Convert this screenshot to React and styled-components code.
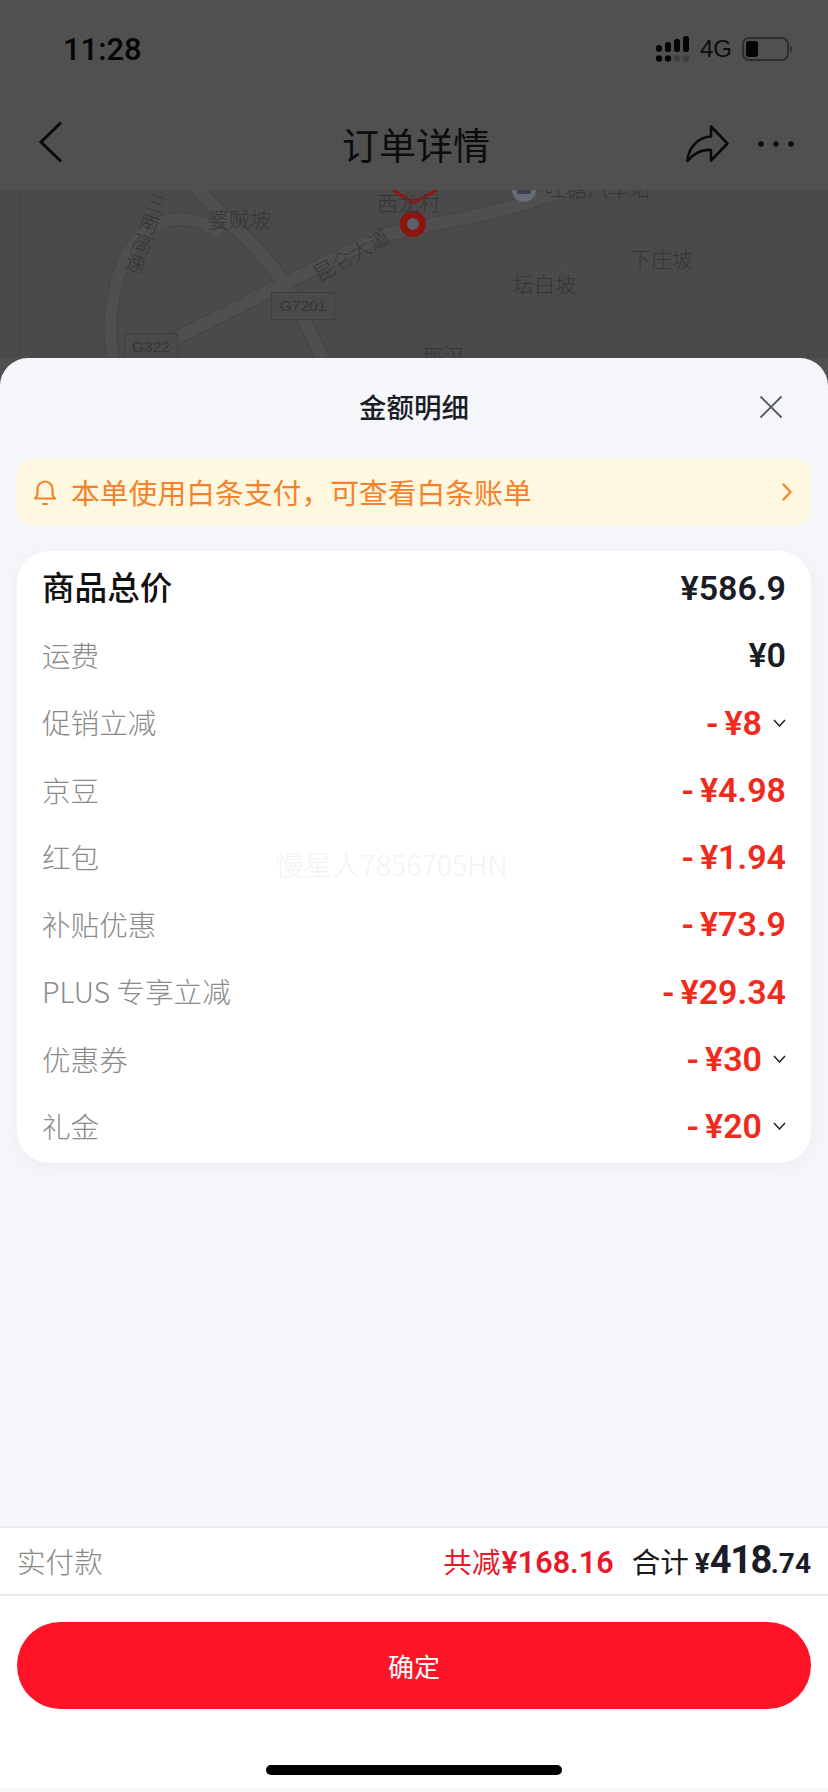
import styled, { createGlobalStyle } from 'styled-components'

const CJK = `"Noto Sans CJK SC", "Noto Sans", sans-serif`
const NUM = `Roboto, "Noto Sans CJK SC", sans-serif`
const INK = '#1a1c26'
const RED = '#f02a1d'

const GlobalStyle = createGlobalStyle`
  html, body {
    margin: 0;
    padding: 0;
    background: #f5f6fa;
  }
  * {
    box-sizing: border-box;
  }
`

const Page = styled.div`
  width: 828px;
  height: 1792px;
  display: flex;
  flex-direction: column;
  overflow: hidden;
  position: relative;
  background: #505050;
  font-family: ${CJK};
`

const StatusBar = styled.div`
  height: 98px;
  padding: 0 36px 0 63px;
  display: flex;
  align-items: center;
  justify-content: space-between;
  color: #050505;
`

const Time = styled.div`
  font-family: ${NUM};
  font-size: 31px;
  font-weight: 500;
`

const StatusIcons = styled.div`
  display: flex;
  align-items: center;
`

const NetworkType = styled.span`
  font-family: 'Liberation Sans', sans-serif;
  font-size: 24px;
  margin: 0 10px 0 10px;
  color: #0d0d0d;
`

const NavBar = styled.div`
  height: 92px;
  padding: 0 34px 0 38px;
  display: grid;
  grid-template-columns: 1fr auto 1fr;
  align-items: center;
  color: #0a0a0a;
`

const NavTitle = styled.div`
  font-size: 37px;
  font-weight: 400;
  line-height: 1;
  color: #0c0c0c;
`

const NavRight = styled.div`
  display: flex;
  justify-content: flex-end;
  align-items: center;
  gap: 29px;
`

const MapArea = styled.div`
  height: 168px;
  position: relative;
  overflow: hidden;
  background: #4a4a4a;
`

const MapDrawing = styled.svg`
  position: absolute;
  left: 0;
  top: 0;
`

const MapLabel = styled.span`
  position: absolute;
  left: ${({ $x }) => $x}px;
  top: ${({ $y }) => $y}px;
  transform: rotate(${({ $rotate }) => $rotate || 0}deg);
  writing-mode: ${({ $vertical }) => ($vertical ? 'vertical-rl' : 'horizontal-tb')};
  font-size: 21px;
  font-weight: 300;
  line-height: 1;
  white-space: nowrap;
  color: #363636;
`

const RoadShield = styled.span`
  position: absolute;
  left: ${({ $x }) => $x}px;
  top: ${({ $y }) => $y}px;
  width: ${({ $w }) => $w}px;
  height: ${({ $h }) => $h}px;
  display: flex;
  align-items: center;
  justify-content: center;
  border: 1px solid #3d3d3d;
  background: #4a4a4a;
  font-family: 'Liberation Sans', sans-serif;
  font-size: 15.500px;
  color: #363636;
`

const Sheet = styled.div`
  flex: 1;
  position: relative;
  display: flex;
  flex-direction: column;
  background: #f5f6fa;
  border-radius: 28px 28px 0 0;
`

const SheetHeader = styled.div`
  height: 101px;
  padding: 0 45px 4px 0;
  position: relative;
  display: flex;
  align-items: center;
  justify-content: flex-end;
`

const SheetTitle = styled.div`
  position: absolute;
  left: 0;
  right: 0;
  top: 31px;
  text-align: center;
  font-size: 27.500px;
  font-weight: 500;
  line-height: 1.3;
  color: ${INK};
`

const Notice = styled.div`
  height: 66px;
  margin: 0 17px;
  padding: 0 19px 0 16px;
  display: flex;
  align-items: center;
  gap: 14px;
  border-radius: 16px;
  background: #fff8e0;
  color: #f5822a;
  font-size: 28.800px;
`

const NoticeText = styled.span`
  flex: 1;
  line-height: 1;
`

const Card = styled.div`
  height: 612px;
  margin: 26px 17px 0;
  padding: 3px 25px;
  border-radius: 32px;
  background: #fff;
  box-shadow: 0 4px 14px rgba(210, 214, 226, 0.25);
`

const Row = styled.div`
  height: 67.250px;
  display: flex;
  align-items: center;
  justify-content: space-between;
`

const RowLabel = styled.span`
  margin-top: ${({ $strong }) => ($strong ? -3 : 1)}px;
  font-size: ${({ $strong }) => ($strong ? 32.600 : 28.600)}px;
  font-weight: ${({ $strong }) => ($strong ? 500 : 300)};
  color: ${({ $strong }) => ($strong ? '#111' : '#8a8a8a')};
  line-height: 1;
`

const RowValue = styled.span`
  display: flex;
  align-items: center;
  margin-top: 1px;
  font-family: ${NUM};
  font-size: 34px;
  font-weight: 600;
  line-height: 1;
  color: ${({ $red }) => ($red ? RED : INK)};
`

const Dash = styled.span`
  margin-right: 6px;
`

const Caret = styled.svg`
  margin-left: 11px;
`

const Spacer = styled.div`
  flex: 1;
`

const SummaryBar = styled.div`
  height: 70px;
  padding: 0 17px 2px;
  display: flex;
  align-items: center;
  justify-content: space-between;
  background: #fff;
  border-top: 2px solid #e9eaee;
  border-bottom: 2px solid #e9eaee;
`

const SummaryLabel = styled.span`
  font-size: 28.600px;
  font-weight: 300;
  color: #888;
`

const Totals = styled.div`
  display: flex;
  align-items: baseline;
  font-size: 28.600px;
  line-height: 1;
`

const Saved = styled.span`
  color: #e8192c;
  margin-right: 18px;
`

const SavedAmount = styled.span`
  font-family: ${NUM};
  font-size: 30.500px;
  font-weight: 600;
  margin-left: 1px;
`

const TotalLabel = styled.span`
  color: #1a1a1a;
  margin-right: 6px;
`

const Amount = styled.span`
  font-family: ${NUM};
  font-weight: 700;
  color: ${INK};
  font-size: ${({ $size }) => $size}px;
  letter-spacing: ${({ $tight }) => ($tight ? -1.500 : 0)}px;
`

const Footer = styled.div`
  height: 192px;
  padding: 26px 17px 0;
  display: flex;
  flex-direction: column;
  background: #fff;
  margin-bottom: 4px;
`

const ConfirmButton = styled.button`
  height: 87px;
  border: 0;
  border-radius: 44px;
  background: #ff1427;
  color: #fff;
  font-family: ${CJK};
  font-size: 26px;
  font-weight: 400;
`

const HomeIndicator = styled.div`
  width: 296px;
  height: 10px;
  margin: 56px auto 0;
  border-radius: 5px;
  background: #000;
`

const Watermark = styled.div`
  position: absolute;
  left: 275px;
  top: 492px;
  font-size: 28.500px;
  font-weight: 300;
  line-height: 1;
  color: #f3f3f3;
  white-space: nowrap;
`

const rows = [
  { label: '运费', value: '¥0' },
  { label: '促销立减', value: '¥8', off: true, caret: true },
  { label: '京豆', value: '¥4.98', off: true },
  { label: '红包', value: '¥1.94', off: true },
  { label: '补贴优惠', value: '¥73.9', off: true },
  { label: 'PLUS 专享立减', value: '¥29.34', off: true },
  { label: '优惠券', value: '¥30', off: true, caret: true },
  { label: '礼金', value: '¥20', off: true, caret: true },
]

const roads = [
  { d: 'M197 188c20 26 55 50 88 96 12 20 26 52 38 74', width: 15 },
  { d: 'M113 358c-8-45 4-105 34-128 20-15 50-15 74 4', width: 14 },
  { d: 'M172 340 285 283 380 236c40-10 90-18 120-26 24-6 50-14 78-24', width: 15 },
]

const SignalIcon = () => (
  <svg width="34" height="26" viewBox="0 0 34 26" fill="#050505">
    <rect x="0" y="9" width="6" height="7" rx="3" />
    <rect x="9" y="6" width="6" height="10" rx="2.500" />
    <rect x="18" y="3" width="6" height="13" rx="2.500" />
    <rect x="27" y="0" width="6" height="16" rx="2.500" />
    <circle cx="3" cy="22.500" r="3.200" />
    <circle cx="12" cy="22.500" r="3.200" />
    <circle cx="21" cy="22.500" r="3.200" fill="#3e3e3e" />
    <circle cx="30" cy="22.500" r="3.200" fill="#3e3e3e" />
  </svg>
)

const BatteryIcon = () => (
  <svg width="50" height="26" viewBox="0 0 50 26">
    <rect x="1" y="2" width="45" height="22" rx="6" fill="none" stroke="#2e2e2e" strokeWidth="2" />
    <rect x="4" y="5" width="12" height="16" rx="3" fill="#030303" />
    <path d="M48 9.500c1.500.8 2 2 2 3.500s-.5 2.700-2 3.500z" fill="#2e2e2e" />
  </svg>
)

const BackIcon = () => (
  <svg width="24" height="40" viewBox="0 0 24 40" fill="none" stroke="#0a0a0a" strokeWidth="3" strokeLinecap="round">
    <path d="M22 1.500 3 20l19 18.500" />
  </svg>
)

const ShareIcon = () => (
  <svg width="43" height="38" viewBox="0 0 43 38" fill="none" stroke="#0a0a0a" strokeWidth="2.600" strokeLinejoin="round">
    <path d="M1.500 36C2 23 12 12 25 11.500V1.500L41.500 18.500 25 35.500V25C15 24 8 28 1.500 36Z" />
  </svg>
)

const MoreIcon = () => (
  <svg width="36" height="6" viewBox="0 0 36 6" fill="#0a0a0a">
    <circle cx="3" cy="3" r="2.700" />
    <circle cx="18" cy="3" r="2.700" />
    <circle cx="33" cy="3" r="2.700" />
  </svg>
)

const CloseIcon = () => (
  <svg width="24" height="24" viewBox="0 0 24 24" stroke="#55575f" strokeWidth="1.800" fill="none">
    <path d="M1.500 1.500l21 21M22.500 1.500l-21 21" />
  </svg>
)

const BellIcon = () => (
  <svg width="24" height="28" viewBox="0 0 24 28" fill="none" stroke="#f5822a" strokeWidth="2.200" strokeLinecap="round" strokeLinejoin="round">
    <path d="M2 20.500c2-1.500 2.500-3 2.500-6V11a7.500 7.500 0 0 1 15 0v3.500c0 3 .5 4.500 2.500 6z" />
    <path d="M10 26h4" />
  </svg>
)

const ChevronRight = () => (
  <svg width="10" height="18" viewBox="0 0 10 18" fill="none" stroke="#f5822a" strokeWidth="2.200" strokeLinecap="round">
    <path d="M1.500 1.500 8.500 9l-7 7.500" />
  </svg>
)

const CaretDown = () => (
  <Caret width="13" height="8" viewBox="0 0 13 8" fill="none" stroke="#222" strokeWidth="1.500">
    <path d="M1 1l5.500 6L12 1" />
  </Caret>
)

const MapRoads = () => (
  <MapDrawing width="828" height="168" viewBox="0 190 828 168" fill="none">
    <path d="M20 190v168M808 190v168" stroke="#444" strokeWidth="1" />
    {roads.map(road => (
      <path key={road.d} d={road.d} stroke="#444" strokeWidth={road.width} />
    ))}
    {roads.map(road => (
      <path key={road.d} d={road.d} stroke="#4f4f4f" strokeWidth={road.width - 2} />
    ))}
    <path d="M557 202c-6 20-8 36-5 50 8 16 24 26 31 43 3 10 4 20 5 30" stroke="#4e4e4e" strokeWidth="1.500" />
    <circle cx="524" cy="190" r="12" fill="#656b78" />
    <rect x="517" y="189" width="14" height="5" rx="2" fill="#3c4250" />
    <path d="M393 190l20 13 24-13" stroke="#8a1a1a" strokeWidth="3.500" />
    <circle cx="413" cy="224" r="9.500" stroke="#8e1410" strokeWidth="7" fill="#5a626c" />
  </MapDrawing>
)

export default function App() {
  return (
    <Page>
      <GlobalStyle />
      <StatusBar>
        <Time>11:28</Time>
        <StatusIcons>
          <SignalIcon />
          <NetworkType>4G</NetworkType>
          <BatteryIcon />
        </StatusIcons>
      </StatusBar>
      <NavBar>
        <div>
          <BackIcon />
        </div>
        <NavTitle>订单详情</NavTitle>
        <NavRight>
          <ShareIcon />
          <MoreIcon />
        </NavRight>
      </NavBar>
      <MapArea>
        <MapRoads />
        <MapLabel $x={208} $y={18}>婆贼坡</MapLabel>
        <MapLabel $x={377} $y={2}>西龙村</MapLabel>
        <MapLabel $x={309} $y={54} $rotate={-30}>昆仑大道</MapLabel>
        <MapLabel $x={135} $y={1} $rotate={19} $vertical>三南高速</MapLabel>
        <MapLabel $x={545} $y={-13}>吐糖汽车站</MapLabel>
        <MapLabel $x={513} $y={83}>坛白坡</MapLabel>
        <MapLabel $x={630} $y={58}>下庄坡</MapLabel>
        <MapLabel $x={422} $y={155}>那汉</MapLabel>
        <RoadShield $x={271} $y={102} $w={64} $h={28}>G7201</RoadShield>
        <RoadShield $x={124} $y={143} $w={54} $h={27}>G322</RoadShield>
      </MapArea>
      <Sheet>
        <SheetHeader>
          <SheetTitle>金额明细</SheetTitle>
          <CloseIcon />
        </SheetHeader>
        <Notice>
          <BellIcon />
          <NoticeText>本单使用白条支付，可查看白条账单</NoticeText>
          <ChevronRight />
        </Notice>
        <Card>
          <Row>
            <RowLabel $strong>商品总价</RowLabel>
            <RowValue>¥586.9</RowValue>
          </Row>
          {rows.map(row => (
            <Row key={row.label}>
              <RowLabel>{row.label}</RowLabel>
              <RowValue $red={row.off}>
                {row.off && <Dash>-</Dash>}
                {row.value}
                {row.caret && <CaretDown />}
              </RowValue>
            </Row>
          ))}
        </Card>
        <Watermark>慢星人7856705HN</Watermark>
        <Spacer />
        <SummaryBar>
          <SummaryLabel>实付款</SummaryLabel>
          <Totals>
            <Saved>
              共减<SavedAmount>¥168.16</SavedAmount>
            </Saved>
            <TotalLabel>合计</TotalLabel>
            <Amount $size={28}>¥</Amount>
            <Amount $size={38} $tight>418</Amount>
            <Amount $size={28}>.74</Amount>
          </Totals>
        </SummaryBar>
        <Footer>
          <ConfirmButton>确定</ConfirmButton>
          <HomeIndicator />
        </Footer>
      </Sheet>
    </Page>
  )
}
